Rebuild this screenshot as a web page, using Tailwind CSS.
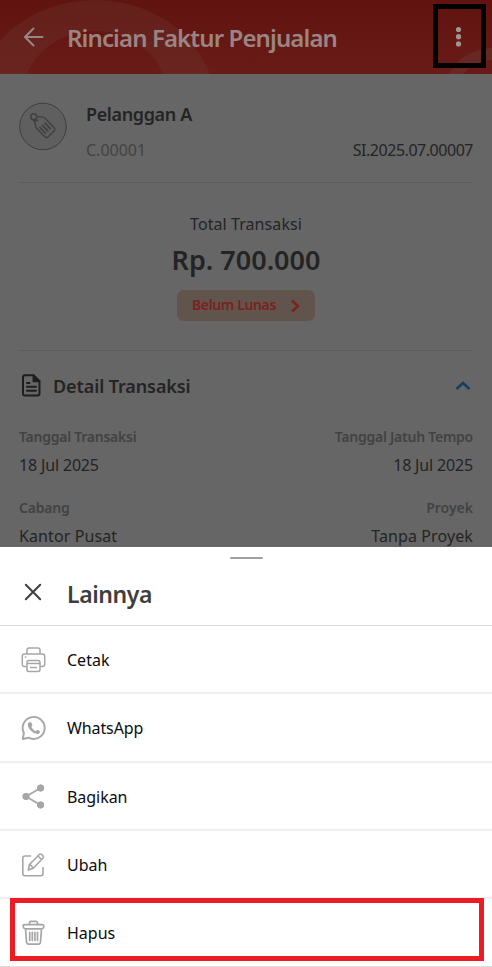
<!DOCTYPE html>
<html lang="id">
<head>
<meta charset="utf-8">
<meta name="viewport" content="width=device-width, initial-scale=1">
<title>Rincian Faktur Penjualan</title>
<script src="https://cdn.jsdelivr.net/npm/@tailwindcss/browser@4"></script>
</head>
<body class="bg-white font-['Noto_Sans',sans-serif] text-[16px] whitespace-nowrap">
<div class="relative flex h-[967px] w-[492px] flex-col overflow-hidden">
  <main class="h-[547px] overflow-hidden bg-[#666666] text-[#242424]">
    <header class="relative flex h-[74px] items-center overflow-hidden bg-linear-to-b from-[#61140f] to-[#691c17] pl-[23px] text-[#9b8583]">
      <svg class="absolute inset-0" width="492" height="74" fill="#6a3c39" fill-opacity=".28">
        <path fill-rule="evenodd" d="M-25 105A120 105 0 0 1 215 105ZM23 95A72 64 0 0 1 167 95Z"/>
        <path d="M449 74Q462 50 492 48V60Q474 62 463 74Z" fill-opacity=".4"/>
      </svg>
      <svg class="relative" width="21" height="20" viewBox="0 0 21 20" fill="none" stroke="currentColor" stroke-width="2" stroke-linecap="round" stroke-linejoin="round"><path d="M10.500 1.500L2 10l8.500 8.500M2.500 10H19.500"/></svg>
      <h1 class="relative ml-[23px] pt-[1px] text-[24px] font-semibold tracking-[-0.88px]">Rincian Faktur Penjualan</h1>
      <svg class="absolute top-[26px] left-[455px]" width="7" height="22" fill="#a39492"><circle cx="3.500" cy="3.500" r="2.600"/><circle cx="3.500" cy="10.700" r="2.600"/><circle cx="3.500" cy="17.900" r="2.600"/></svg>
    </header>
    <div class="px-[19px]">
      <section class="flex h-[109px] border-b border-[#5b5b5b] pt-[28px]">
        <svg width="49" height="49" viewBox="0 0 49 49" fill="none" stroke="#3f3f3f" stroke-linecap="round" stroke-linejoin="round">
          <circle cx="24" cy="24.500" r="23.300" fill="#5f5f5f" stroke-width="1"/>
          <path d="M15.500 20L17.300 26L25.500 34.500Q27.500 36.500 29.500 34.500L35 29Q36.700 27.300 34.800 25.300L26 16.300Q25 15.300 23.500 15.200L19 14.800" stroke-width="1.300"/>
          <circle cx="14.800" cy="14.800" r="3" stroke-width="1.600"/><path d="M14 18Q16 20 18.800 18.200" stroke-width="1.500"/>
          <path d="M21 25.500l5.300 5.500M23.500 23.300l5.300 5.500M26 21.200l5.300 5.500" stroke-width="1.700"/>
        </svg>
        <div class="ml-[18px] flex flex-1 flex-col">
          <h2 class="h-[24px] text-[18px] leading-[24px] font-semibold tracking-[-0.38px]">Pelanggan A</h2>
          <div class="mt-[12px] flex h-[24px] justify-between leading-[24px]"><span class="text-[#434343]">C.00001</span><span class="tracking-[-0.47px]">SI.2025.07.00007</span></div>
        </div>
      </section>
      <section class="flex h-[168px] flex-col items-center border-b border-[#5b5b5b] pt-[29px]">
        <div class="h-[24px] leading-[24px] tracking-[0.08px]">Total Transaksi</div>
        <div class="mt-[6px] h-[36px] text-[27px] leading-[36px] font-semibold">Rp. 700.000</div>
        <div class="mt-[12px] flex h-[31px] w-[138px] items-center rounded-[7px] bg-[#60544d] pl-[15px] text-[14px] font-semibold text-[#7c211d]"><span class="w-[84px] pb-[2px] tracking-[-0.37px]">Belum Lunas</span>
          <svg class="ml-[14px]" width="11" height="14" fill="none" stroke="currentColor" stroke-width="2.400"><path d="M2 1.500L8 7L2 12.500"/></svg>
        </div>
      </section>
      <section>
        <div class="flex h-[70px] items-center">
          <svg class="ml-[2px]" width="21" height="24" viewBox="0 0 21 24" fill="none" stroke="#1e1e1e" stroke-width="2" stroke-linecap="round" stroke-linejoin="round"><path d="M4 1.300H12.500L18.500 7.300V19.500Q18.500 21.500 16.500 21.500H4Q2 21.500 2 19.500V3.300Q2 1.300 4 1.300Z"/><path d="M12.500 1.500V7.300H18.300Z" fill="#1e1e1e"/><path d="M6 9H8.500M6 12.800H15M6 16.800H15"/></svg>
          <h2 class="ml-[11px] text-[18px] font-semibold tracking-[-0.1px]">Detail Transaksi</h2>
          <svg class="mr-[2px] ml-auto" width="16" height="10" fill="none" stroke="#173d62" stroke-width="2.500"><path d="M1.500 8L8 2L14.500 8"/></svg>
        </div>
        <div class="flex h-[30px] items-center justify-between text-[14px] font-semibold tracking-[-0.25px] text-[#424242]"><span>Tanggal Transaksi</span><span>Tanggal Jatuh Tempo</span></div>
        <div class="flex h-[28px] items-center justify-between tracking-[-0.16px]"><span>18 Jul 2025</span><span>18 Jul 2025</span></div>
        <div class="mt-[13px] flex h-[30px] items-center justify-between text-[14px] font-semibold tracking-[-0.2px] text-[#424242]"><span>Cabang</span><span class="tracking-normal">Proyek</span></div>
        <div class="flex h-[28px] items-center justify-between tracking-[0.1px]"><span>Kantor Pusat</span><span>Tanpa Proyek</span></div>
      </section>
    </div>
  </main>
  <section class="flex h-[420px] flex-col bg-white text-[#0c0c0c]">
    <div class="relative flex h-[79px] items-center border-b border-[#dcdcdc] pt-[15px] pl-[24px] text-[#3e3e3e]">
      <span class="absolute top-[10px] left-[230px] h-[2px] w-[33px] rounded bg-[#a0a0a0]"></span>
      <svg class="mb-[3px]" width="18" height="18" fill="none" stroke="currentColor" stroke-width="2" stroke-linecap="round"><path d="M1.800 1.800L16.200 16.200M16.200 1.800L1.800 16.200"/></svg>
      <h2 class="ml-[25px] pt-[1px] text-[23px] font-semibold tracking-[-0.42px]">Lainnya</h2>
    </div>
    <ul>
      <li class="flex h-[68px] items-center border-b-2 border-[#f0f0f0] pt-[2px] pl-[21px]">
        <svg width="25" height="26" viewBox="0 0 25 26" fill="none" stroke="#a6a6a6" stroke-width="1.500" stroke-linejoin="round"><path d="M6 7V3Q6 1 8 1H17Q19 1 19 3V7M6 19.500H3.500Q1.300 19.500 1.300 17.300V9.200Q1.300 7 3.500 7H21.500Q23.700 7 23.700 9.200V17.300Q23.700 19.500 21.500 19.500H19"/><rect x="6" y="13.500" width="13" height="11" rx="2"/><path d="M3.800 10h1.500M6 16.500h13M9 20.500h7"/></svg>
        <span class="ml-[21px]">Cetak</span></li>
      <li class="flex h-[69px] items-center border-b-2 border-[#f0f0f0] pt-[1px] pl-[21px]">
        <svg width="25" height="26" viewBox="0 0 25 26" fill="none" stroke="#a6a6a6" stroke-width="1.900" stroke-linejoin="round"><path d="M1.800 24L2.900 18A11 11 0 1 1 7.600 22.700Z"/><path d="M8.200 7.200L10.200 7.200L11.500 10.400L10.300 12Q12 15 15 16.300L16.300 14.800L19 16.200Q18.900 19 16.500 19Q13 19 9.700 15.500Q6.500 11.800 6.800 9.500Q7.200 7.800 8.200 7.200Z" fill="#a6a6a6" stroke="none"/></svg>
        <span class="ml-[21px] tracking-[-0.1px]">WhatsApp</span></li>
      <li class="flex h-[68px] items-center border-b-2 border-[#f0f0f0] pt-[2px] pl-[21px]">
        <svg width="25" height="26" viewBox="0 0 25 26" fill="#a6a6a6" stroke="#a6a6a6"><path d="M19.600 4L5 12.500L19.600 21" fill="none" stroke-width="1.800"/><circle cx="19.600" cy="4" r="3.200"/><circle cx="5" cy="12.500" r="3.200"/><circle cx="19.600" cy="21" r="3.200"/></svg>
        <span class="ml-[21px] tracking-[-0.05px]">Bagikan</span></li>
      <li class="flex h-[68px] items-center border-b-2 border-[#f0f0f0] pt-[2px] pl-[21px]">
        <svg width="25" height="26" viewBox="0 0 25 26" fill="none" stroke="#a6a6a6" stroke-width="1.600" stroke-linecap="round" stroke-linejoin="round"><path d="M9.500 4H4Q1.800 4 1.800 6V21.500Q1.800 23.700 4 23.700H20Q22 23.700 22 21.500V15.500"/><path d="M7.300 18L8.500 12.500L18.300 2.500Q19.500 1.400 21 2.700L22 3.700Q23 5 21.800 6.300L12.300 16.300ZM17 4L20.500 7.500M9 12.500L12.300 16"/></svg>
        <span class="ml-[21px]">Ubah</span></li>
      <li class="flex h-[68px] items-center border-b border-[#dcdcdc] pt-[1px] pl-[21px]">
        <svg width="25" height="26" viewBox="0 0 25 26" fill="none" stroke="#a6a6a6" stroke-width="1.700" stroke-linecap="round" stroke-linejoin="round"><path d="M8.500 4.300V3Q8.500 1.300 10 1.300H15Q16.500 1.300 16.500 3V4.300M3.500 4.600H21.500Q23 4.800 22.800 6.500Q22.500 8.800 20.500 8.800H4.500Q2.500 8.800 2.200 6.500Q2 4.800 3.500 4.600ZM4.500 9L5.500 22Q5.700 24.200 7.700 24.200H17.300Q19.300 24.200 19.500 22L20.500 9M8.700 12.300V20.500M11.300 12.300V20.500M13.900 12.300V20.500M16.500 12.300V20.500"/></svg>
        <span class="ml-[21px]">Hapus</span></li>
    </ul>
  </section>
  <div class="absolute top-[4px] left-[433px] h-[64px] w-[53px] border-[5px] border-black"></div>
  <div class="absolute top-[898px] left-[10px] h-[63px] w-[474px] border-[5px] border-[#ed1c24]"></div>
</div>
</body>
</html>
